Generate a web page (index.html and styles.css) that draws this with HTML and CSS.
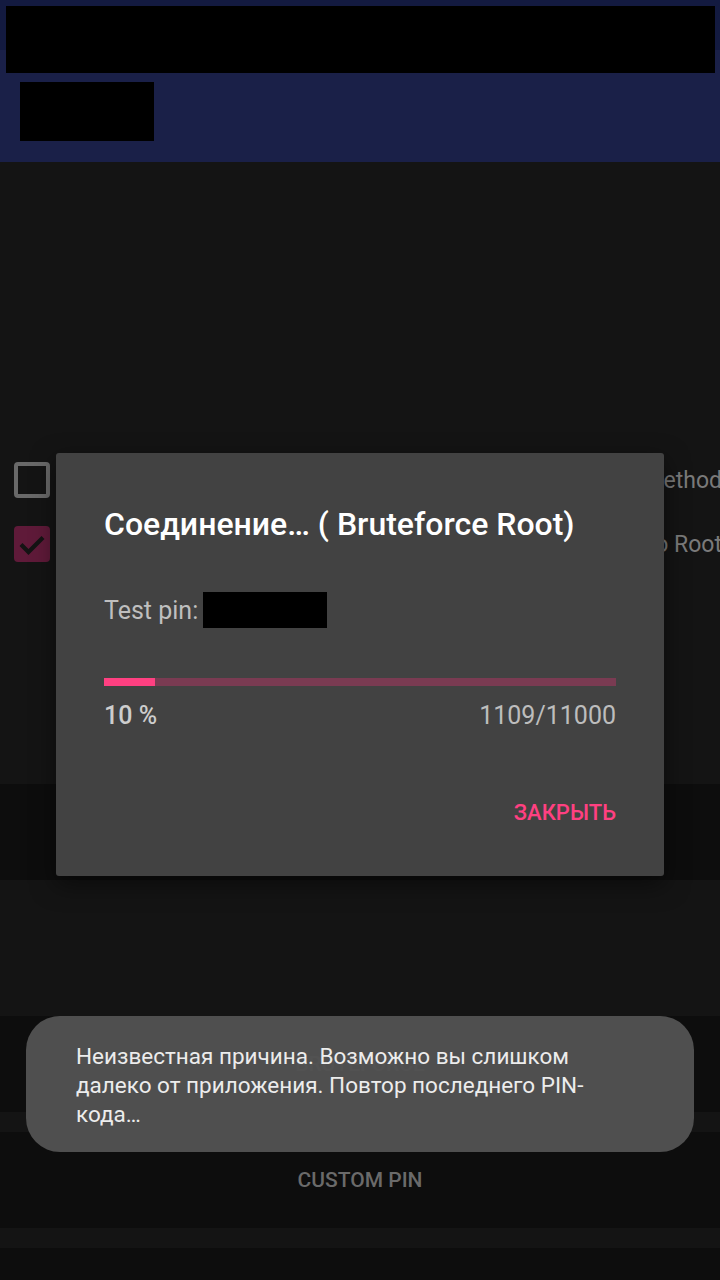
FILE: index.html
```html
<!DOCTYPE html>
<html lang="ru">
<head>
<meta charset="utf-8">
<title>Bruteforce</title>
<link rel="stylesheet" href="styles.css">
</head>
<body>
<div class="screen">
  <header class="appbar">
    <div class="redact redact-title"></div>
    <div class="redact redact-sub"></div>
  </header>

  <section class="content">
    <div class="opt-row">
      <span class="checkbox"></span>
      <span class="opt-label">Alternative method</span>
    </div>
    <div class="opt-row second">
      <span class="checkbox checked">
        <svg viewBox="0 0 36 36" width="36" height="36"><path d="M7 18.5 L14.5 26 L29 11.5" fill="none" stroke="#141414" stroke-width="4.2"/></svg>
      </span>
      <span class="opt-label">Bruteforce to Root</span>
    </div>
  </section>

  <div class="btn btn-first"></div>
  <div class="btn btn-second">BRUTEFORCE</div>
  <div class="btn btn-third">CUSTOM PIN</div>
  <div class="btn btn-last"></div>

  <div class="dialog">
    <div class="dlg-title">Соединение… ( Bruteforce Root)</div>
    <div class="dlg-pin">Test pin: <span class="redact redact-pin"></span></div>
    <div class="progress"><div class="progress-fill" style="width:10%"></div></div>
    <div class="progress-info">
      <span class="pct">10 %</span>
      <span class="count">1109/11000</span>
    </div>
    <div class="dlg-actions"><span class="dlg-btn">ЗАКРЫТЬ</span></div>
  </div>

  <div class="toast">Неизвестная причина. Возможно вы слишком далеко от приложения. Повтор последнего PIN-кода…</div>
</div>
</body>
</html>
```

FILE: styles.css
```css
* { box-sizing: border-box; }
html, body { margin: 0; padding: 0; }
body {
  background: #141414;
  font-family: Roboto, "Noto Sans", "Liberation Sans", sans-serif;
}
.screen {
  position: relative;
  width: 720px;
  height: 1280px;
  overflow: hidden;
  background: #141414;
}
.appbar {
  height: 162px;
  background: linear-gradient(#131a40 0, #131a40 50px, #1a2048 50px, #1a2048 100%);
  padding-top: 6px;
  display: flex;
  flex-direction: column;
}
.redact { background: #000; display: block; }
.redact-title { margin-left: 6px; width: 709px; height: 67px; }
.redact-sub { margin-left: 20px; margin-top: 9px; width: 134px; height: 59px; }

.content {
  height: 622px;
  padding-top: 300px;
}
.opt-row {
  display: flex;
  align-items: center;
  height: 36px;
  padding-left: 14px;
}
.opt-row.second { margin-top: 28px; }
.checkbox {
  width: 36px;
  height: 36px;
  border: 4px solid #696969;
  border-radius: 4px;
  flex: none;
  display: flex;
}
.checkbox.checked {
  border: none;
  background: #5f1a39;
}
.opt-label {
  flex: 1;
  text-align: right;
  white-space: nowrap;
  font-size: 23px;
  color: #7a7a7a;
  margin-right: -2px;
}

.btn {
  height: 96px;
  background: #0d0d0d;
  display: flex;
  align-items: center;
  justify-content: center;
  font-size: 21px;
  font-weight: 500;
  color: #6a6a6a;
}
.btn-second { margin-top: 136px; color: #5a5a5a; }
.btn-third { margin-top: 20px; }
.btn-last { margin-top: 20px; }

.dialog {
  position: absolute;
  left: 56px;
  top: 453px;
  width: 608px;
  height: 423px;
  background: #424242;
  border-radius: 3px;
  box-shadow: 0 8px 24px rgba(0,0,0,0.5);
  padding: 53px 48px 0 48px;
  display: flex;
  flex-direction: column;
}
.dlg-title {
  font-size: 32px;
  font-weight: 500;
  line-height: 36px;
  color: #ffffff;
  white-space: nowrap;
}
.dlg-pin {
  margin-top: 50px;
  height: 36px;
  display: flex;
  align-items: center;
  font-size: 25px;
  color: #bfbfbf;
}
.redact-pin { width: 124px; height: 36px; margin-left: 5px; }
.progress {
  margin-top: 50px;
  height: 8px;
  background: #7a3b52;
}
.progress-fill { height: 100%; background: #ff4081; }
.progress-info {
  margin-top: 15px;
  display: flex;
  justify-content: space-between;
  line-height: 30px;
  font-size: 25px;
}
.pct { font-weight: 500; color: #cdcdcd; }
.count { color: #bdbdbd; }
.dlg-actions {
  margin-top: 68px;
  display: flex;
  justify-content: flex-end;
}
.dlg-btn {
  font-size: 22px;
  font-weight: 500;
  line-height: 28px;
  color: #ff4081;
}

.toast {
  position: absolute;
  left: 26px;
  top: 1016px;
  width: 668px;
  height: 136px;
  border-radius: 34px;
  background: rgba(82, 82, 82, 0.96);
  padding: 26px 80px 0 50px;
  font-size: 22.5px;
  line-height: 29px;
  color: #ececec;
}
```
